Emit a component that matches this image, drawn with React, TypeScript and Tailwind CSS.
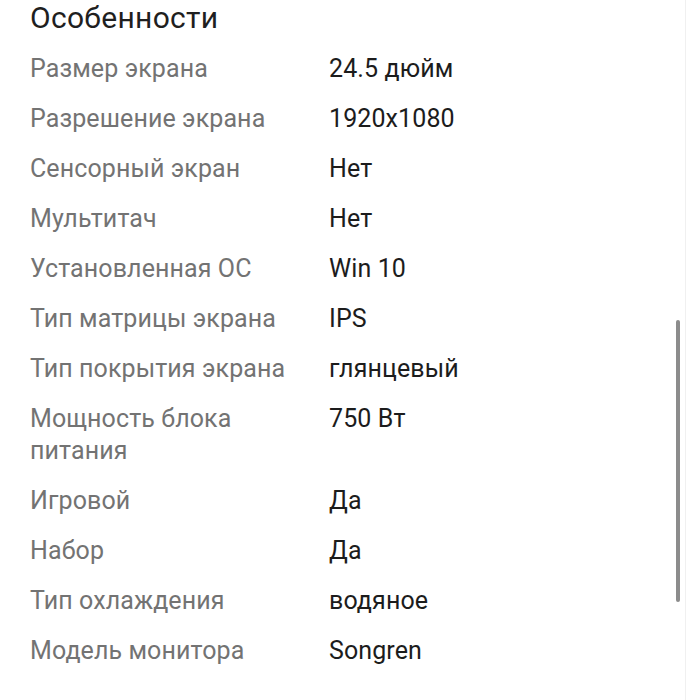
const specs: [string, string][] = [
  ["Размер экрана", "24.5 дюйм"],
  ["Разрешение экрана", "1920x1080"],
  ["Сенсорный экран", "Нет"],
  ["Мультитач", "Нет"],
  ["Установленная ОС", "Win 10"],
  ["Тип матрицы экрана", "IPS"],
  ["Тип покрытия экрана", "глянцевый"],
  ["Мощность блока питания", "750 Вт"],
  ["Игровой", "Да"],
  ["Набор", "Да"],
  ["Тип охлаждения", "водяное"],
  ["Модель монитора", "Songren"],
];

export default function App() {
  return (
    <main className="relative h-[700px] w-[686px] overflow-hidden bg-white font-['Roboto',sans-serif]">
      <h2 className="px-[30px] text-[30px] leading-[36px] tracking-[0.3px] text-[#1f1f1f]">Особенности</h2>

      <dl className="mt-2 px-[30px]">
        {specs.map(([label, value]) => (
          <div key={label} className="flex py-[9px] text-[25px] leading-[32px] tracking-[0.1px]">
            <dt className="w-[299px] shrink-0 pr-4 text-[#737373]">{label}</dt>
            <dd className="text-[#1c1c1c]">{value}</dd>
          </div>
        ))}
      </dl>

      {/* scroll indicator */}
      <div className="absolute left-[676px] top-[320px] h-[282px] w-[4px] rounded-full bg-[#8c8c8c]" />
      <div className="absolute right-0 top-0 h-full w-px bg-[#f0f0f0]" />
    </main>
  );
}
